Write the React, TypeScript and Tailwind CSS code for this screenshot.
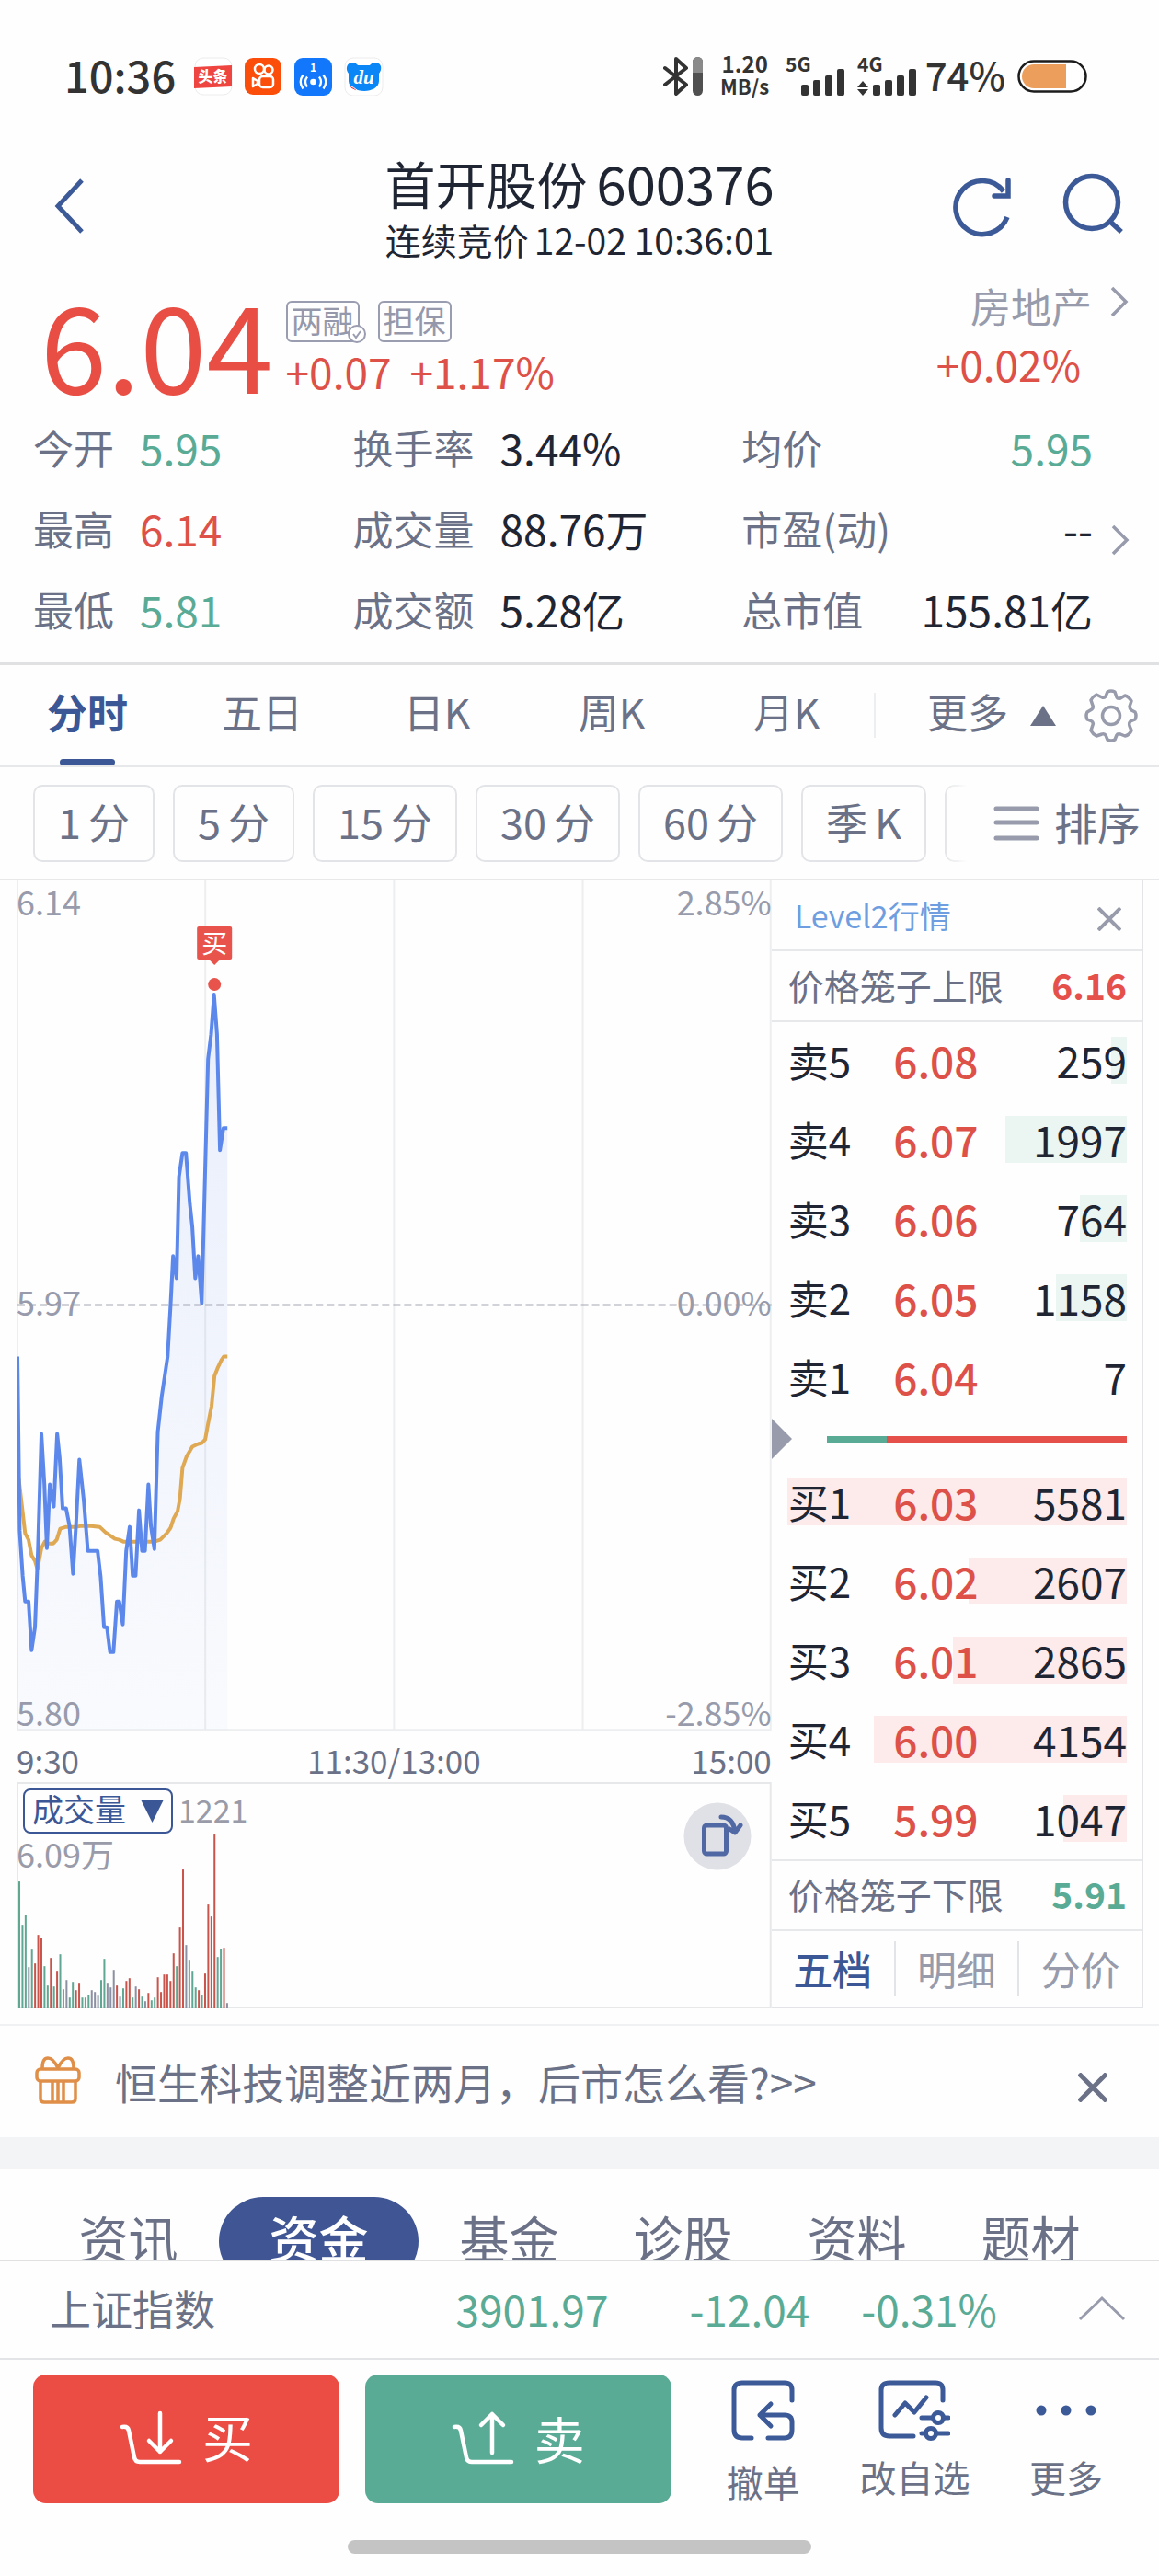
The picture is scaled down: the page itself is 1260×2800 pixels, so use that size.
import React, { useState } from 'react';
import { clsx, type ClassValue } from 'clsx';
import { twMerge } from 'tailwind-merge';

function cn(...inputs: ClassValue[]) {
  return twMerge(clsx(inputs));
}

type Tone = 'up' | 'down' | 'flat';

const toneText: Record<Tone, string> = {
  up: 'text-[#dd5148]',
  down: 'text-[#5aab95]',
  flat: 'text-[#1f2532]',
};

interface Stat {
  label: string;
  value: string;
  tone: Tone;
}

const STATS: Stat[] = [
  { label: '今开', value: '5.95', tone: 'down' },
  { label: '换手率', value: '3.44%', tone: 'flat' },
  { label: '均价', value: '5.95', tone: 'down' },
  { label: '最高', value: '6.14', tone: 'up' },
  { label: '成交量', value: '88.76万', tone: 'flat' },
  { label: '市盈(动)', value: '--', tone: 'flat' },
  { label: '最低', value: '5.81', tone: 'down' },
  { label: '成交额', value: '5.28亿', tone: 'flat' },
  { label: '总市值', value: '155.81亿', tone: 'flat' },
];

const CHART_TABS = ['分时', '五日', '日K', '周K', '月K'];
const PERIODS: [string, string][] = [['1', '分'], ['5', '分'], ['15', '分'], ['30', '分'], ['60', '分'], ['季', 'K']];
const INFO_TABS = ['资讯', '资金', '基金', '诊股', '资料', '题材'];

interface Level {
  name: string;
  price: string;
  volume: number;
}

const ASKS: Level[] = [
  { name: '卖5', price: '6.08', volume: 259 },
  { name: '卖4', price: '6.07', volume: 1997 },
  { name: '卖3', price: '6.06', volume: 764 },
  { name: '卖2', price: '6.05', volume: 1158 },
  { name: '卖1', price: '6.04', volume: 7 },
];

const BIDS: Level[] = [
  { name: '买1', price: '6.03', volume: 5581 },
  { name: '买2', price: '6.02', volume: 2607 },
  { name: '买3', price: '6.01', volume: 2865 },
  { name: '买4', price: '6.00', volume: 4154 },
  { name: '买5', price: '5.99', volume: 1047 },
];

const MAX_VOLUME = 5581;

const PRICE_LINE =
  '1,517 3.4,706 6.6,755 9.3,783 13,783 16.3,836 20,811 23.2,728 27,601 30.2,656 32.9,725 36.1,656 40.4,680 44.1,601 46.8,627 50,682 53.8,682 57.5,701 61.3,753 64.5,701 68.2,629 73,673 77.4,728 88,728 91.3,756 95,811 98.2,811 101.5,838 105.2,838 109,783 111.6,783 115.4,808 119.1,728 122.9,702 126.1,755 129.3,755 133,684 136.3,728 139.5,728 143.2,656 145.9,701 149.7,726 153.4,599 157.7,560 164.1,517 167.3,461 170,408 173.8,432 176.4,322 180.2,296 184,296 188.2,351 190.9,376 194.1,432 197.3,408 201.1,459 208,194 211.3,167 214.5,124 217.7,167 220.9,293 224.7,269 229,269';

const AVG_LINE =
  '2.4,650 9.3,709 13,716 16.3,733 20,739 22.7,748 27,725 30.7,718 34,720 39.9,720 43.6,716 47.4,704 53.8,702 65,702 70.4,701 81,701 90.2,702 96.6,708 106.8,715 111.6,716 115.9,718 149.7,718 156.1,716 163.1,709 167.3,703 170.6,693 174.9,685 177.5,671 180.2,638 184.5,626 190.9,615 197.3,612 201.1,611 204.9,607 208,590 211.8,571 215,538 218.2,530 222.5,521 225.2,517 229,517';

// one entry per minute: bar height followed by r(ise), g(fall) or n(eutral)
const VOLUME_BARS =
  '138g 91g 102g 45n 64g 49r 80r 77r 46g 25g 55r 24g 41r 59g 21g 31n 12g 29g 20r 28r 12g 12g 15g 20n 18n 14n 31g 54g 28n 23n 42n 25r 13n 22g 30r 33r 12g 24n 21r 13g 8n 17r 9g 12g 34r 18r 37r 37r 30r 60r 46g 88r 151r 69n 53g 41g 23g 20r 15g 38r 113r 100r 189r 56g 65g 66r 6n'.split(' ');

const barColor: Record<string, string> = { r: '#c9544c', g: '#5fa792', n: '#8b90a3' };

const Signal: React.FC<{ label: string; arrows?: boolean }> = ({ label, arrows }) => (
  <svg width="66" height="42" viewBox="0 0 66 42" fill="#333" className="overflow-visible" aria-hidden="true">
    <text x="0" y="16" fontSize="21" fontWeight="700">{label}</text>
    {arrows && <path d="M6 26l6 7H0zM6 42l6-7H0z" />}
    <rect x="17" y="30" width="8" height="12" rx="2" />
    <rect x="30" y="25" width="8" height="17" rx="2" />
    <rect x="43" y="20" width="8" height="22" rx="2" />
    <rect x="56" y="13" width="8" height="29" rx="2" />
  </svg>
);

const StatusBar: React.FC = () => (
  <div className="flex items-center justify-between pl-[70px] pr-[78px] pt-[62px] text-[#333]">
    <div className="flex h-[42px] items-center">
      <span className="mr-[20px] pb-1.5 text-[47px] font-medium leading-none">10:36</span>
      <svg width="206" height="42" viewBox="0 0 206 42" aria-hidden="true">
        <rect x="1" y="1" width="40" height="40" rx="9" fill="#fff" stroke="#ececec" />
        <path d="M0 11l41-2v23l-41 2z" fill="#ee4540" />
        <text x="20.500" y="27" fontSize="16" fontWeight="900" fill="#fff" textAnchor="middle">头条</text>
        <rect x="55" y="1" width="40" height="40" rx="9" fill="#fb4e0b" />
        <g fill="none" stroke="#fff" strokeWidth="2.500" strokeLinejoin="round">
          <circle cx="71" cy="13" r="5" />
          <circle cx="81" cy="14" r="4.500" />
          <rect x="71" y="21" width="15" height="12" rx="3.500" />
          <path d="M64 23l5 3v3l-5 3z" />
        </g>
        <rect x="109" y="1" width="41" height="41" rx="9" fill="#1277fb" />
        <text x="129.500" y="16" fontSize="12" fontWeight="700" fill="#fff" textAnchor="middle">1</text>
        <circle cx="129.500" cy="27" r="3.300" fill="#fff" />
        <path d="M123 21.500q-4 5.500 0 11M118.500 19.500q-5.500 7.500 0 15M136 21.500q4 5.500 0 11M140.500 19.500q5.500 7.500 0 15" fill="none" stroke="#fff" strokeWidth="2.300" />
        <rect x="164" y="1" width="41" height="41" rx="9" fill="#fff" stroke="#ececec" />
        <path d="M172 6c3 0 5 1.500 6 3h13c1-1.500 3-3 6-3 5 0 7 4 6 8-.5 2-1.500 3-2 4v8c0 7-8 11-16 11s-17-4-17-11v-8c-4-5-2-12 4-12z" fill="#0b86f7" />
        <path d="M168 31c4 1 7 3 10 6-5-1-8-3-10-6z" fill="#e0414f" stroke="#fff" />
        <text x="184.500" y="29" fontSize="21" fontWeight="700" fontStyle="italic" fill="#fff" textAnchor="middle" fontFamily="Liberation Serif, serif">du</text>
      </svg>
    </div>
    <div className="flex h-[42px] items-center">
      <svg width="44" height="42" viewBox="0 0 44 42" className="mr-[17px]" aria-hidden="true">
        <path d="M2 12l23 18-11 10V2l11 10L2 30" fill="none" stroke="#333" strokeWidth="4" strokeLinejoin="round" strokeLinecap="round" />
        <rect x="32" y="0" width="11" height="42" rx="5.500" fill="#505050" />
        <path d="M32 17V5.500a5.500 5.500 0 0 1 11 0V17z" fill="#8a8a8a" />
      </svg>
      <div className="mr-4 w-14 pb-1 text-center text-[22px] font-bold leading-[24px]">
        <div className="text-[24px]">1.20</div>
        <div>MB/s</div>
      </div>
      <Signal label="5G" />
      <div className="ml-3 mr-2">
        <Signal label="4G" arrows />
      </div>
      <span className="mr-[13px] pb-1 text-[42px] font-medium leading-none">74%</span>
      <svg width="76" height="36" viewBox="0 0 76 36" aria-hidden="true">
        <rect x="1.500" y="1.500" width="73" height="33" rx="16.500" fill="#fff" stroke="#1c1c1c" strokeWidth="2.500" />
        <path d="M53 5H18a13 13 0 0 0 0 26h35z" fill="#ec9f5c" />
      </svg>
    </div>
  </div>
);

const Header: React.FC = () => (
  <header className="mt-[66px] grid grid-cols-[1fr_auto_1fr] text-[#1f2532]">
    <div className="pl-[56px] pt-[22px]">
      <button aria-label="返回" className="block">
        <svg width="38" height="64" viewBox="0 0 38 64" fill="none" stroke="#3d5a98" strokeWidth="5">
          <path d="M33 4L7 32l26 28" />
        </svg>
      </button>
    </div>
    <div className="text-center">
      <h1 className="flex items-center justify-center gap-[10px] text-[55px] leading-[56px]">
        首开股份<span className="text-[58px]">600376</span>
      </h1>
      <p className="mt-[14px] whitespace-nowrap text-[39px] leading-[40px]">连续竞价<span className="ml-[6px]">12-02 10:36:01</span></p>
    </div>
    <div className="flex justify-end gap-[52px] pr-[39px] pt-[16px]">
      <button aria-label="刷新" className="block h-[72px]">
        <svg width="66" height="72" viewBox="0 0 66 72" fill="none" stroke="#3d5a98" strokeWidth="5.500">
          <path d="M60 50A29 29 0 1 1 56 22" />
          <path d="M61 10v17H46" strokeLinejoin="miter" strokeLinecap="round" />
        </svg>
      </button>
      <button aria-label="搜索" className="block h-[72px]">
        <svg width="68" height="72" viewBox="0 0 68 72" fill="none" stroke="#3d5a98" strokeWidth="5.500">
          <circle cx="34" cy="34" r="28.500" />
          <path d="M53 54l13 12" />
        </svg>
      </button>
    </div>
  </header>
);

const Chevron: React.FC<{ className?: string }> = ({ className }) => (
  <svg width="20" height="34" viewBox="0 0 20 34" className={className} fill="none" stroke="#979bab" strokeWidth="3.500" aria-hidden="true">
    <path d="M2 2l15 15L2 32" />
  </svg>
);

const Quote: React.FC = () => (
  <section>
    <div className="mt-[26px] flex h-[138px] justify-between pl-[44px] pr-[33px]">
      <div className="flex">
        <span className="text-[130px] leading-none text-[#e94e45]">6.04</span>
        <div className="ml-[14px] pt-[21px]">
          <div className="flex gap-[20px] text-[34px] leading-none text-[#9598ab]">
            <span className="relative flex h-[45px] items-center rounded-md border-2 border-[#9a9db0] px-1 pb-1">
              两融
              <svg width="22" height="22" viewBox="0 0 22 22" className="absolute -bottom-1 -right-2.5" aria-hidden="true">
                <circle cx="11" cy="11" r="9" fill="#fff" stroke="#9a9db0" strokeWidth="2" />
                <path d="M7 11l3 4 5-7" fill="none" stroke="#9a9db0" strokeWidth="2" />
              </svg>
            </span>
            <span className="flex h-[45px] items-center rounded-md border-2 border-[#9a9db0] px-1 pb-1">担保</span>
          </div>
          <div className="mt-2 flex gap-5 text-[46px] leading-none text-[#dd5148]">
            <span>+0.07</span>
            <span>+1.17%</span>
          </div>
        </div>
      </div>
      <div className="flex flex-col items-end pt-[4px]">
        <a href="#sector" className="flex items-center gap-[20px] text-[44px] leading-none text-[#979bab]">
          房地产
          <Chevron className="mb-2" />
        </a>
        <div className="mr-[52px] mt-[18px] text-[46px] leading-none text-[#dd5148]">+0.02%</div>
      </div>
    </div>

    <div className="relative pb-[12px]">
      <dl className="grid grid-cols-[347fr_422fr_381fr] pl-[36px] pr-[72px]">
        {STATS.map((s, i) => (
          <div key={s.label} className={cn('flex h-[88px] items-center gap-[28px] whitespace-nowrap pb-1', i % 3 === 2 && 'justify-between')}>
            <dt className="text-[44px] leading-none text-[#6b7186]">{s.label}</dt>
            <dd className={cn('text-[46px] leading-none', toneText[s.tone])}>{s.value}</dd>
          </div>
        ))}
      </dl>
      <button aria-label="更多指标" className="absolute right-[32px] top-[126px]">
        <Chevron />
      </button>
    </div>
  </section>
);

const Gear: React.FC = () => (
  <svg width="58" height="58" viewBox="0 0 58 58" fill="none" stroke="#979bab" strokeWidth="3.500" strokeLinejoin="round" aria-hidden="true">
    <path d="M25 3q4-2 8 0l2 6q1 2 4 1l5-3q4 1 7 6l-2 6q0 2 2 4l4 2q2 4 0 8l-5 2q-2 2-1 5l2 5q-2 5-7 6l-5-2q-3-1-4 1l-2 5q-4 2-8 0l-2-5q-2-2-4-1l-6 2q-4-2-6-6l2-6q1-2-1-4l-5-2q-2-4 0-8l5-3q2-2 1-4l-2-6q2-4 6-6l6 3q2 1 4-1z" />
    <circle cx="29" cy="29" r="9.500" />
  </svg>
);

const ChartTabs: React.FC = () => {
  const [active, setActive] = useState('分时');
  return (
    <nav className="flex h-[114px] items-center border-b-2 border-t-[3px] border-b-[#e6e8ea] border-t-[#dfe1e3] text-[44px] leading-none text-[#6b7186]">
      <div className="flex h-full w-[75.4%]">
        {CHART_TABS.map((t) => (
          <button
            key={t}
            onClick={() => setActive(t)}
            className={cn('relative flex-1 pb-2.5 leading-none', t === active && 'font-bold text-[#3b5795]')}
          >
            {t}
            {t === active && <span className="absolute bottom-0 left-1/2 h-[7px] w-[60px] -translate-x-1/2 rounded bg-[#3b5795]" />}
          </button>
        ))}
      </div>
      <div className="flex h-[49px] flex-1 items-center justify-end border-l-2 border-[#eceef0] pr-[23px]">
        <button className="flex items-center gap-[24px]">
          <span className="pb-2.5">更多</span>
          <svg width="28" height="22" viewBox="0 0 28 22" fill="#6b7186" aria-hidden="true">
            <path d="M14 0l14 22H0z" />
          </svg>
        </button>
        <button aria-label="设置" className="ml-[31px]">
          <Gear />
        </button>
      </div>
    </nav>
  );
};

const PeriodBar: React.FC = () => (
  <div className="flex h-[123px] items-center justify-between border-b-2 border-[#e6e8ea] pl-[36px] pr-[20px] text-[#6b7186]">
    <div className="flex gap-[20px]">
      {PERIODS.map(([a, b]) => (
        <button key={a} className="flex h-[84px] items-center gap-2 rounded-[10px] border-2 border-[#e2e4e7] px-[25px] pb-1 text-[45px] leading-none">
          <span>{a}</span>
          <span>{b}</span>
        </button>
      ))}
      <span className="h-[84px] w-6 rounded-l-[10px] border-2 border-r-0 border-[#e2e4e7] [mask-image:linear-gradient(to_right,black,transparent)]" />
    </div>
    <button className="flex items-center gap-4 whitespace-nowrap text-[47px] leading-none">
      <svg width="50" height="40" viewBox="0 0 50 40" stroke="#979bab" strokeWidth="5" strokeLinecap="round" aria-hidden="true">
        <path d="M3 4h44M3 19h44M3 36h44" />
      </svg>
      <span className="pb-1">排序</span>
    </button>
  </div>
);

const PriceChart: React.FC = () => (
  <div className="relative text-[36px] leading-none text-[#979bab]">
    <svg viewBox="0 0 820 924" className="block h-auto w-full" role="img" aria-label="分时走势">
      <defs>
        <linearGradient id="area" x1="0" y1="0" x2="0" y2="1">
          <stop offset="0" stopColor="#5b86ea" stopOpacity=".13" />
          <stop offset="1" stopColor="#5b86ea" stopOpacity=".03" />
        </linearGradient>
      </defs>
      <path d="M1 0v923M205 0v923M410 0v923M615 0v923M819 0v923M0 922.500h820" stroke="#eceef0" strokeWidth="2" />
      <polygon points={`${PRICE_LINE} 229,922 1,922`} fill="url(#area)" />
      <path d="M1 461H820" stroke="#a3a8b4" strokeWidth="2" strokeDasharray="8 4" />
      <polyline points={AVG_LINE} fill="none" stroke="#dfa853" strokeWidth="4" strokeLinejoin="round" />
      <polyline points={PRICE_LINE} fill="none" stroke="#5c88ec" strokeWidth="4" strokeLinejoin="round" />
      <circle cx="215" cy="113" r="7" fill="#e8544c" />
      <path d="M198 50h34q2 0 2 2v32q0 2-2 2h-11l-6 6-6-6h-11q-2 0-2-2v-32q0-2 2-2z" fill="#e8544c" />
      <text x="215" y="79" fontSize="28" fill="#fff" textAnchor="middle">买</text>
    </svg>
    <span className="absolute left-0 top-[4px]">6.14</span>
    <span className="absolute right-0 top-[4px]">2.85%</span>
    <span className="absolute left-0 top-[439px]">5.97</span>
    <span className="absolute right-0 top-[439px]">0.00%</span>
    <span className="absolute bottom-[4px] left-0">5.80</span>
    <span className="absolute bottom-[4px] right-0">-2.85%</span>
  </div>
);

const VolumeChart: React.FC = () => (
  <div className="relative">
    <svg viewBox="0 0 820 246" className="block h-auto w-full" role="img" aria-label="成交量">
      <path d="M1 245V1h818v244z" fill="none" stroke="#e6e8ea" strokeWidth="2" />
      {VOLUME_BARS.map((b, i) => {
        const h = parseInt(b, 10);
        return <rect key={i} x={2 + i * 3.42} y={246 - h} width="2" height={h} fill={barColor[b.slice(-1)]} />;
      })}
    </svg>
    <div className="absolute left-[7px] top-[7px] flex items-center gap-[6px]">
      <button className="flex h-[49px] items-center gap-[16px] rounded-lg border-2 border-[#3b5795] px-[8px] text-[34px] leading-none text-[#3b5795]">
        <span className="pb-1">成交量</span>
        <svg width="25" height="25" viewBox="0 0 25 25" fill="#3b5795" aria-hidden="true">
          <path d="M0 0h25L12.500 25z" />
        </svg>
      </button>
      <span className="pb-0.5 text-[34px] leading-none text-[#999ba8]">1221</span>
    </div>
    <span className="absolute left-0 top-[59px] text-[36px] leading-none text-[#999ba8]">6.09万</span>
    <button aria-label="横屏" className="absolute right-[22px] top-[22px]">
      <svg width="74" height="74" viewBox="0 0 74 74" aria-hidden="true">
        <circle cx="37" cy="37" r="36.500" fill="#e0e0e7" />
        <g fill="none" stroke="#5068a3" strokeWidth="5" strokeLinejoin="round" strokeLinecap="round">
          <rect x="22.500" y="25" width="24" height="31" rx="3" />
          <path d="M41 16q13 0 15 16M50 29l6 4 6-8" />
        </g>
      </svg>
    </button>
  </div>
);

const Levels: React.FC<{ rows: Level[]; bar: string }> = ({ rows, bar }) => (
  <table className="w-full table-fixed text-[#1f2532]">
    <tbody>
      {rows.map((r) => (
        <tr key={r.name} className="h-[86px] text-[46px] leading-none">
          <th scope="row" className="w-[90px] whitespace-nowrap pb-1 pl-[2px] text-left text-[44px] font-normal">{r.name}</th>
          <td className="pb-1 text-center font-medium text-[#dd5148]">{r.price}</td>
          <td className="relative w-[135px] pb-1 text-right">
            <span
              className={cn('absolute right-0 top-[16px] h-[51px]', bar)}
              style={{ width: Math.round((369 * r.volume) / MAX_VOLUME) }}
            />
            <span className="relative">{r.volume}</span>
          </td>
        </tr>
      ))}
    </tbody>
  </table>
);

const OrderBook: React.FC = () => {
  const [tab, setTab] = useState('五档');
  return (
    <aside className="flex w-[33%] flex-col border-b-2 border-r-2 border-[#e2e4e7]">
      <div className="flex h-[77px] items-center justify-between border-b-2 border-[#e6e8ea] pl-[25px] pr-[22px]">
        <a href="#level2" className="text-[34px] leading-none text-[#6f9ee0]">Level2行情</a>
        <button aria-label="关闭" className="mt-2">
          <svg width="26" height="26" viewBox="0 0 26 26" stroke="#979bab" strokeWidth="4">
            <path d="M1 1l24 24M25 1L1 25" />
          </svg>
        </button>
      </div>
      <div className="flex h-[77px] items-center justify-between border-b-2 border-[#e6e8ea] pb-0.5 pl-[18px] pr-4 leading-none">
        <span className="text-[39px] text-[#6b7186]">价格笼子上限</span>
        <span className="text-[39px] font-bold text-[#e5504a]">6.16</span>
      </div>
      <div className="relative z-0 pl-4 pr-4">
        <Levels rows={ASKS} bar="-z-10 bg-[#ebf5f2]" />
      </div>
      <div className="flex h-[50px] items-center pb-1 pr-4">
        <svg width="22" height="44" viewBox="0 0 22 44" fill="#979bab" aria-hidden="true">
          <path d="M0 0l22 22L0 44z" />
        </svg>
        <div className="ml-[38px] flex h-[7px] flex-1 bg-[#e5504a]">
          <span className="w-1/5 bg-[#5aab95]" />
        </div>
      </div>
      <div className="relative z-0 pl-4 pr-4">
        <Levels rows={BIDS} bar="-z-10 bg-[#fcebea]" />
      </div>
      <div className="flex h-[78px] items-center justify-between border-y-2 border-[#e6e8ea] pb-1 pl-[18px] pr-4 leading-none">
        <span className="text-[39px] text-[#6b7186]">价格笼子下限</span>
        <span className="text-[39px] font-bold text-[#5aab95]">5.91</span>
      </div>
      <div className="flex flex-1 items-center divide-x-2 divide-[#e2e4e7]">
        {['五档', '明细', '分价'].map((t) => (
          <button
            key={t}
            onClick={() => setTab(t)}
            className={cn('h-[60px] flex-1 pb-0.5 text-[43px] leading-none text-[#979bab]', t === tab && 'font-medium text-[#3b5795]')}
          >
            {t}
          </button>
        ))}
      </div>
    </aside>
  );
};

const NoticeBar: React.FC = () => (
  <div className="mt-[17px] flex h-[123px] items-center border-t-2 border-[#f0f1f3] pl-[38px] pr-[56px]">
    <svg width="50" height="52" viewBox="0 0 50 52" fill="none" stroke="#e08f48" strokeWidth="3.500" className="mb-1" aria-hidden="true">
      <rect x="2" y="14" width="46" height="13" rx="4" />
      <path d="M6 27v19q0 4 4 4h30q4 0 4-4V27M19 27v23M25 27v23M31 27v23M25 13Q20 2 14 2T8 13M25 13Q30 2 36 2t6 11" />
    </svg>
    <a href="#notice" className="ml-[37px] flex-1 whitespace-nowrap pb-0.5 text-[46px] leading-none text-[#6b7186]">恒生科技调整近两月，后市怎么看?&gt;&gt;</a>
    <button aria-label="关闭" className="mt-3">
      <svg width="32" height="32" viewBox="0 0 32 32" stroke="#6b7186" strokeWidth="5">
        <path d="M1 1l30 30M31 1L1 31" />
      </svg>
    </button>
  </div>
);

const InfoTabs: React.FC = () => {
  const [tab, setTab] = useState('资金');
  return (
    <nav className="flex h-[98px] overflow-hidden px-[45px] pt-[30px] text-[#6b7186]">
      {INFO_TABS.map((t) => (
        <button
          key={t}
          onClick={() => setTab(t)}
          className={cn(
            'h-[96px] flex-1 pb-2 text-[54px] leading-none',
            t === tab && 'mx-1 w-[217px] flex-none rounded-full bg-[#3f5594] font-medium text-white'
          )}
        >
          {t}
        </button>
      ))}
    </nav>
  );
};

const IndexBar: React.FC = () => (
  <div className="flex h-[107px] items-center border-t-2 border-[#dfe1e3] pb-1 pl-[54px] pr-[36px] text-[46px] leading-none text-[#5aab95]">
    <span className="flex-1 text-[45px] text-[#6b7186]">上证指数</span>
    <span className="mr-[88px]">3901.97</span>
    <span className="mr-[56px]">-12.04</span>
    <span className="mr-[88px]">-0.31%</span>
    <button aria-label="展开">
      <svg width="52" height="28" viewBox="0 0 52 28" fill="none" stroke="#979bab" strokeWidth="3">
        <path d="M2 26L26 3l24 23" />
      </svg>
    </button>
  </div>
);

const ActionBar: React.FC = () => (
  <div className="flex border-t-2 border-[#e2e4e7] pb-[40px] pl-[36px] pr-[36px] pt-[16px]">
    <div className="flex w-[58.4%] gap-[28px] text-[55px] leading-none text-white">
      <button className="flex h-[140px] flex-1 items-center justify-center gap-[22px] rounded-[14px] bg-[#eb4d45]">
        <svg width="68" height="62" viewBox="0 0 68 62" fill="none" stroke="#fff" strokeWidth="4.500" strokeLinecap="round" strokeLinejoin="round" aria-hidden="true">
          <path d="M3 18q6-1 7 4l6 29q1 5 6 5h43" />
          <path d="M44 3v42M32 33l12 12 12-12" />
        </svg>
        <span className="pb-2">买</span>
      </button>
      <button className="flex h-[140px] flex-1 items-center justify-center gap-[22px] rounded-[14px] bg-[#5aab95]">
        <svg width="68" height="62" viewBox="0 0 68 62" fill="none" stroke="#fff" strokeWidth="4.500" strokeLinecap="round" strokeLinejoin="round" aria-hidden="true">
          <path d="M3 18q6-1 7 4l6 29q1 5 6 5h43" />
          <path d="M44 46V4M32 16L44 4l12 12" />
        </svg>
        <span className="pb-1">卖</span>
      </button>
    </div>
    <div className="flex flex-1 items-start justify-between whitespace-nowrap pl-[60px] pr-[25px] text-[40px] leading-none text-[#6b7186]">
      <button className="flex flex-col items-center gap-[22px] pt-[6px]">
        <svg width="70" height="68" viewBox="0 0 70 68" fill="none" stroke="#3d5a98" strokeWidth="5" strokeLinecap="round" strokeLinejoin="round" aria-hidden="true">
          <path d="M66 22V11q0-8-8-8H12q-9 0-9 8v43q0 9 9 9h10M40 63h18q8 0 8-9V46q0-8-8-8H31M43 26L31 38l12 12" />
        </svg>
        撤单
      </button>
      <button className="flex flex-col items-center gap-[17px] pt-[6px]">
        <svg width="78" height="68" viewBox="0 0 78 68" fill="none" stroke="#3d5a98" strokeWidth="5" strokeLinecap="round" strokeLinejoin="round" aria-hidden="true">
          <path d="M70 22V11q0-8-8-8H12q-9 0-9 8v41q0 9 9 9h26M18 38l11-13 10 10 13-16M47 41h29M47 58h29" />
          <circle cx="65" cy="41" r="5.500" fill="#fff" />
          <circle cx="57" cy="58" r="5.500" fill="#fff" />
        </svg>
        改自选
      </button>
      <button className="flex flex-col items-center gap-[17px] pt-[6px]">
        <svg width="68" height="68" viewBox="0 0 68 68" fill="#3d5a98" aria-hidden="true">
          <circle cx="7" cy="33" r="5.500" />
          <circle cx="34" cy="33" r="5.500" />
          <circle cx="61" cy="33" r="5.500" />
        </svg>
        更多
      </button>
    </div>
  </div>
);

export default function App() {
  return (
    <main className="flex min-h-screen flex-col bg-[#fefefe] font-['Noto_Sans_CJK_SC',sans-serif]">
      <StatusBar />
      <Header />
      <Quote />
      <ChartTabs />
      <PeriodBar />
      <section className="flex pl-[18px] pr-[17px]">
        <div className="flex-1">
          <PriceChart />
          <div className="grid h-[55px] grid-cols-3 items-center pt-[6px] text-[35px] leading-none text-[#6b7186]">
            <span>9:30</span>
            <span className="text-center">11:30/13:00</span>
            <span className="text-right">15:00</span>
          </div>
          <VolumeChart />
        </div>
        <OrderBook />
      </section>
      <NoticeBar />
      <div className="h-[35px] bg-[#f3f4f6]" />
      <InfoTabs />
      <IndexBar />
      <ActionBar />
      <div className="mx-auto h-[15px] w-2/5 rounded-full bg-[#c4c4c4]" />
    </main>
  );
}
